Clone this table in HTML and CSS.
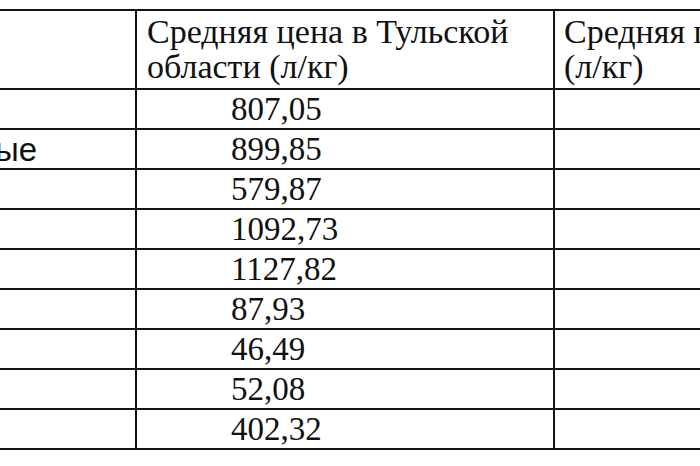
FILE: index.html
```html
<!DOCTYPE html>
<html lang="ru">
<head>
<meta charset="utf-8">
<title>Средняя цена</title>
<link rel="stylesheet" href="styles.css">
</head>
<body>
<table class="prices">
  <colgroup>
    <col class="c-name">
    <col class="c-tula">
    <col class="c-other">
  </colgroup>
  <tr class="head">
    <td></td>
    <td class="h">Средняя цена в Тульской области (л/кг)</td>
    <td class="h">Средняя цена по России<br>(л/кг)</td>
  </tr>
  <tr><td></td><td class="num">807,05</td><td></td></tr>
  <tr><td class="name"><span class="cut">ые</span></td><td class="num">899,85</td><td></td></tr>
  <tr><td></td><td class="num">579,87</td><td></td></tr>
  <tr><td></td><td class="num">1092,73</td><td></td></tr>
  <tr><td></td><td class="num">1127,82</td><td></td></tr>
  <tr><td class="name"><span class="paren">)</span></td><td class="num">87,93</td><td></td></tr>
  <tr><td></td><td class="num">46,49</td><td></td></tr>
  <tr><td></td><td class="num">52,08</td><td></td></tr>
  <tr><td></td><td class="num">402,32</td><td></td></tr>
</table>
</body>
</html>
```
FILE: styles.css
```css
html, body {
  margin: 0;
  padding: 0;
  background: #ffffff;
  overflow: hidden;
}
body {
  width: 700px;
  height: 466px;
  font-family: "Liberation Serif", "Times New Roman", serif;
  font-size: 33px;
  line-height: 35px;
  color: #111111;
}
.prices {
  border-collapse: collapse;
  table-layout: fixed;
  width: 860px;
  margin: 9px 0 0 -3px;
}
.c-name { width: 138px; }
.c-tula { width: 418px; }
.c-other { width: 304px; }
.prices td {
  border: 2px solid #141414;
  padding: 2px 0 0 0;
  vertical-align: top;
  height: 36px;
  box-sizing: border-box;
  white-space: nowrap;
  overflow: hidden;
}
.prices tr { height: 40px; }
.prices tr.head { height: 79px; }
.prices td.h {
  font-size: 34px;
  padding: 3px 8px 0 10px;
  white-space: normal;
}
.prices td.h:last-child {
  white-space: nowrap;
  padding-left: 9px;
}
.prices td.num {
  padding-left: 94px;
}
.prices td.name {
  font-family: "Liberation Sans", Arial, sans-serif;
  color: #111111;
}
.cut {
  display: inline-block;
  margin-left: -4px;
}
.paren {
  display: inline-block;
  font-family: "Liberation Serif", "Times New Roman", serif;
  color: #111111;
  margin-left: -9px;
}
```
